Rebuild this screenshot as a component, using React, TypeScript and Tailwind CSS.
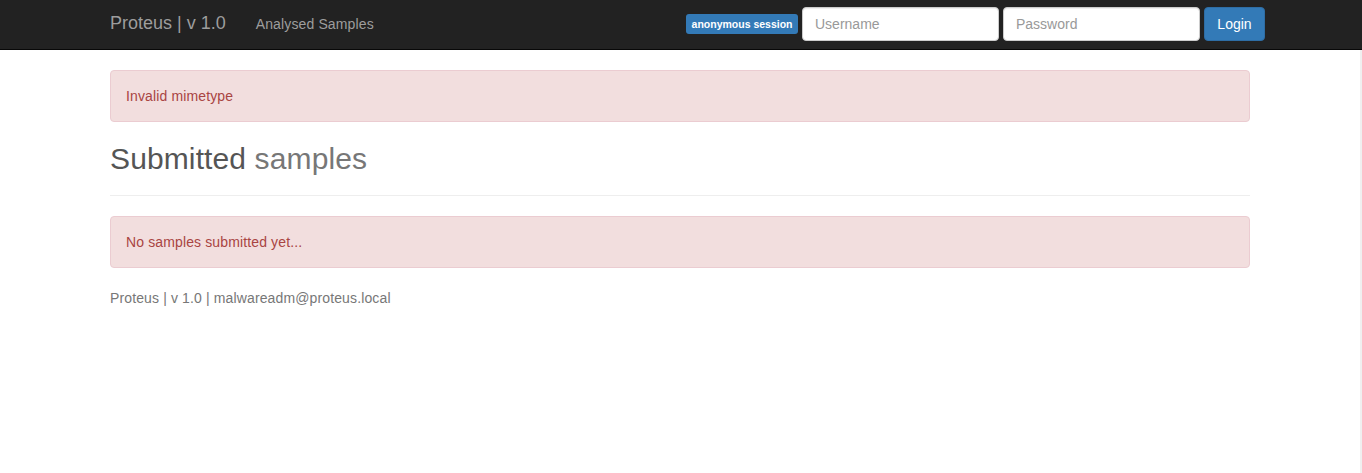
import React from "react";

export default function App() {
  return (
    <div className="min-h-[473px] bg-white text-[14px] leading-[20px] text-[#333] tracking-[0.13px]" style={{ fontFamily: '"Liberation Sans", Arial, sans-serif' }}>
      <nav className="h-[50px] bg-[#222] border-b border-[#080808]">
        <div className="w-[1360px] h-full">
          <div className="w-[1170px] mx-auto px-[15px] flex items-start h-full">
            <a className="h-[49px] px-[15px] -ml-[15px] pt-[13px] text-[18px] leading-[20px] text-[#9d9d9d] tracking-normal">Proteus | v 1.0</a>
            <a className="h-[49px] px-[15px] pt-[14px] leading-[20px] text-[#9d9d9d]">Analysed Samples</a>
            <div className="ml-auto -mr-[15px] flex items-center pt-[7px] gap-[4px] tracking-normal">
              <span className="inline-block bg-[#337ab7] text-white font-bold text-[10.5px] leading-[1] px-[5.5px] pt-[4.5px] pb-[5px] rounded-[3px] whitespace-nowrap">anonymous session</span>
              <input
                placeholder="Username"
                className="w-[197px] h-[34px] px-[12px] py-[6px] bg-white border border-[#ccc] rounded-[4px] text-[14px] text-[#555] placeholder:text-[#999] outline-none shadow-[inset_0_1px_1px_rgba(0,0,0,0.075)]"
              />
              <input
                type="password"
                placeholder="Password"
                className="w-[197px] h-[34px] px-[12px] py-[6px] bg-white border border-[#ccc] rounded-[4px] text-[14px] text-[#555] placeholder:text-[#999] outline-none shadow-[inset_0_1px_1px_rgba(0,0,0,0.075)]"
              />
              <button className="h-[34px] w-[61px] px-[12px] bg-[#337ab7] border border-[#2e6da4] rounded-[4px] text-white text-[14px]">Login</button>
            </div>
          </div>
        </div>
      </nav>
      <div className="flex">
        <div className="w-[1360px]">
          <div className="w-[1170px] mx-auto px-[15px] pt-[20px]">
            <div className="bg-[#f2dede] border border-[#ebccd1] text-[#a94442] rounded-[4px] p-[15px] mb-[20px]">Invalid mimetype</div>
            <div className="border-b border-[#eee] pb-[9px] mb-[20px]">
              <h2 className="text-[30px] leading-[34px] mb-[10px] text-[#555] tracking-[0.12px]">
                Submitted <span className="text-[#777]">samples</span>
              </h2>
            </div>
            <div className="bg-[#f2dede] border border-[#ebccd1] text-[#a94442] rounded-[4px] p-[15px] mb-[20px]">No samples submitted yet...</div>
            <footer className="text-[#777]">Proteus | v 1.0 | malwareadm@proteus.local</footer>
          </div>
        </div>
        <div className="w-[2px] min-h-[423px] bg-[#f0f0f0]" />
      </div>
    </div>
  );
}
